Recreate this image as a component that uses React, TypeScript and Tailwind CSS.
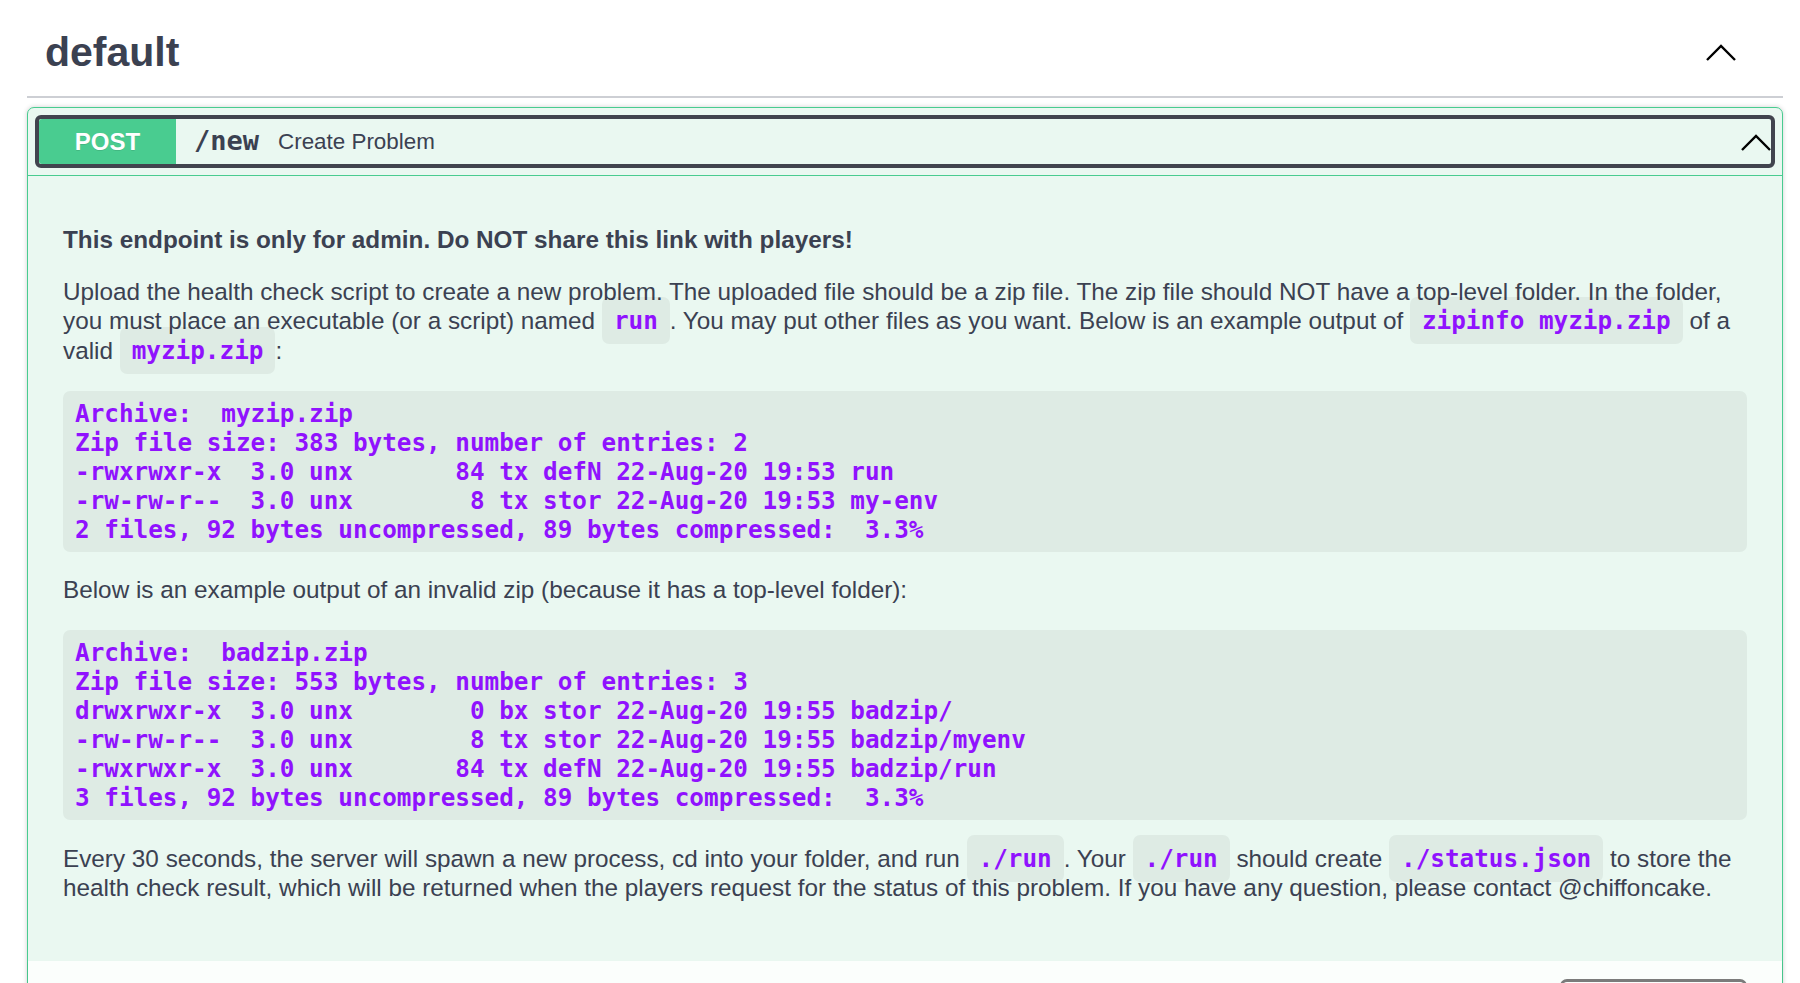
const mono = "font-['DejaVu_Sans_Mono','Liberation_Mono',monospace] font-bold text-[#9012fe]";

function Code({ children }: { children: string }) {
  return (
    <code className={`${mono} text-[24.3px] rounded-[7px] bg-[rgba(0,0,0,0.05)] px-[12px] py-[9px]`}>
      {children}
    </code>
  );
}

function Chevron() {
  return (
    <svg width="30" height="18" viewBox="0 0 30 18" fill="none">
      <polyline points="1,17 15,3 29,17" stroke="#000" strokeWidth="2.4" />
    </svg>
  );
}

const goodZip = `Archive:  myzip.zip
Zip file size: 383 bytes, number of entries: 2
-rwxrwxr-x  3.0 unx       84 tx defN 22-Aug-20 19:53 run
-rw-rw-r--  3.0 unx        8 tx stor 22-Aug-20 19:53 my-env
2 files, 92 bytes uncompressed, 89 bytes compressed:  3.3%`;

const badZip = `Archive:  badzip.zip
Zip file size: 553 bytes, number of entries: 3
drwxrwxr-x  3.0 unx        0 bx stor 22-Aug-20 19:55 badzip/
-rw-rw-r--  3.0 unx        8 tx stor 22-Aug-20 19:55 badzip/myenv
-rwxrwxr-x  3.0 unx       84 tx defN 22-Aug-20 19:55 badzip/run
3 files, 92 bytes uncompressed, 89 bytes compressed:  3.3%`;

function Pre({ text }: { text: string }) {
  return (
    <pre className={`${mono} text-[24.3px] leading-[29px] whitespace-pre rounded-[7px] bg-[rgba(0,0,0,0.05)] pl-[12px] py-[8px]`}>
      {text}
    </pre>
  );
}

export default function App() {
  return (
    <div className="h-[983px] w-full overflow-hidden bg-white font-['Liberation_Sans',Arial,sans-serif] text-[#3b4151]">
      <div className="pl-[27px] pr-[17px]">
        {/* tag header */}
        <div className="flex h-[98px] items-center justify-between border-b-2 border-[#cdcfd4] pl-[18px] pr-[47px] pt-[8px]">
          <h3 className="text-[41px] font-bold leading-none">default</h3>
          <Chevron />
        </div>

        {/* operation block */}
        <div className="mt-[9px] rounded-[7px] border border-[#49cc90] bg-[#eaf8f1] shadow-[0_0_5px_rgba(0,0,0,0.19)]">
          <div className="border-b border-[#49cc90] p-[7px]">
            <div className="flex h-[53px] items-center rounded-[6px] border-4 border-[#41444e]">
              <span className="flex h-full w-[137px] items-center justify-center rounded-l-[3px] bg-[#49cc90] text-[24px] font-bold text-white [text-shadow:0_1px_0_rgba(0,0,0,0.1)]">
                POST
              </span>
              <span className="ml-[18px] font-['DejaVu_Sans_Mono',monospace] text-[27px] font-bold text-[#3b4151]">/new</span>
              <span className="ml-[19px] text-[22.4px]">Create Problem</span>
              <div className="ml-auto">
                <Chevron />
              </div>
            </div>
          </div>

          <div className="px-[35px] pb-[59px] pt-[49px] text-[24.3px] leading-[29.5px]">
            <p className="font-bold">This endpoint is only for admin. Do NOT share this link with players!</p>
            <p className="mt-[22px]">
              Upload the health check script to create a new problem. The uploaded file should be a zip file. The zip
              file should NOT have a top-level folder. In the folder, you must place an executable (or a script) named{" "}
              <Code>run</Code>. You may put other files as you want. Below is an example output of{" "}
              <Code>zipinfo myzip.zip</Code> of a valid <Code>myzip.zip</Code>:
            </p>
            <div className="mt-[26px]">
              <Pre text={goodZip} />
            </div>
            <p className="mt-[23px]">Below is an example output of an invalid zip (because it has a top-level folder):</p>
            <div className="mt-[25px]">
              <Pre text={badZip} />
            </div>
            <p className="mt-[24px] leading-[29px]">
              Every 30 seconds, the server will spawn a new process, cd into your folder, and run <Code>./run</Code>.
              Your <Code>./run</Code> should create <Code>./status.json</Code> to store the health check result, which
              will be returned when the players request for the status of this problem. If you have any question, please
              contact @chiffoncake.
            </p>
          </div>

          <div className="flex min-h-[86px] items-center justify-between bg-[rgba(255,255,255,0.8)] px-[35px] shadow-[0_1px_2px_rgba(0,0,0,0.1)]">
            <h4 className="text-[24px] font-bold">Parameters</h4>
            <button className="h-[50px] w-[187px] rounded-[7px] border-[3px] border-[#7b7b7b] text-[24px] font-bold text-[#3b4151]">
              Try it out
            </button>
          </div>
        </div>
      </div>
    </div>
  );
}
